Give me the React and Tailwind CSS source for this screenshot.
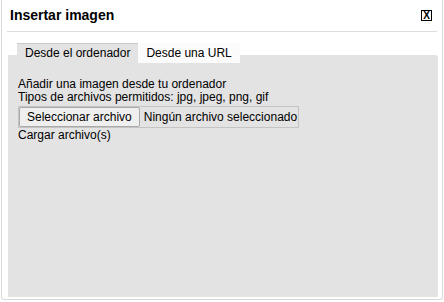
import React from 'react';

const App = () => {
  return (
    <div className="w-[444px] h-[302px] bg-white font-['Liberation_Sans',Arial,sans-serif] text-black">
      <div className="ml-[1px] w-[442px] h-[300px] border-x border-b border-[#d9d9d9] rounded-b-[3px] flex flex-col">
        {/* Header */}
        <div className="h-[31px] flex items-start justify-between pl-[8px] pr-[10px] pt-[7px]">
          <h1 className="text-[14px] leading-[16px] font-bold">Insertar imagen</h1>
          <button className="mt-[3px] w-[11px] h-[11px] border border-black flex items-center justify-center text-[10px] leading-[9px] font-bold">
            X
          </button>
        </div>
        <div className="mx-[5px] h-px bg-[#dddddd]" />

        {/* Tabs */}
        <div className="relative z-10 mt-[11px] pl-[15px] flex text-[12px] leading-[14px]">
          <div className="border-t border-[#c8c8c8] bg-[#e3e3e3] px-[8px] pt-[2px] pb-[3px]">
            Desde el ordenador
          </div>
          <div className="bg-[#fbfbfb] px-[8px] pt-[3px] pb-[3px]">Desde una URL</div>
        </div>

        {/* Panel */}
        <div className="-mt-[8px] ml-[6px] mr-[4px] mb-[2px] flex-1 bg-[#e3e3e3] rounded-tr-[3px] pt-[23px] pl-[10px] text-[12px] leading-[13px]">
          <p>Añadir una imagen desde tu ordenador</p>
          <p>Tipos de archivos permitidos: jpg, jpeg, png, gif</p>
          <div className="mt-[2px] inline-flex items-center border border-[#c4c4c4]">
            <span className="border border-[#a9a9a9] rounded-[2px] bg-[#efefef] px-[7px] py-[2px] leading-[14px]">
              Seleccionar archivo
            </span>
            <span className="pl-[4px] pr-px leading-[14px]">Ningún archivo seleccionado</span>
          </div>
          <p className="mt-[1px]">Cargar archivo(s)</p>
        </div>
      </div>
    </div>
  );
};

export default App;
